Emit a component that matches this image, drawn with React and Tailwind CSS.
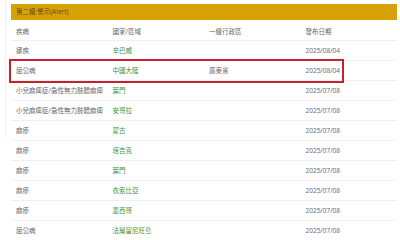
import React from 'react';

const rows = [
  { disease: '瘧疾', country: '辛巴威', region: '', date: '2025/08/04' },
  { disease: '屈公病', country: '中國大陸', region: '廣東省', date: '2025/08/04', flagged: true },
  { disease: '小兒麻痺症/急性無力肢體麻痺', country: '葉門', region: '', date: '2025/07/08' },
  { disease: '小兒麻痺症/急性無力肢體麻痺', country: '安哥拉', region: '', date: '2025/07/08' },
  { disease: '麻疹', country: '蒙古', region: '', date: '2025/07/08' },
  { disease: '麻疹', country: '塔吉克', region: '', date: '2025/07/08' },
  { disease: '麻疹', country: '葉門', region: '', date: '2025/07/08' },
  { disease: '麻疹', country: '衣索比亞', region: '', date: '2025/07/08' },
  { disease: '麻疹', country: '墨西哥', region: '', date: '2025/07/08' },
  { disease: '屈公病', country: '法屬留尼旺島', region: '', date: '2025/07/08' },
];

const App = () => {
  return (
    <div
      className="relative w-[400px] h-[240px] overflow-hidden bg-white text-[6.5px] text-[#666]"
      style={{ fontFamily: '"Open Sans", "Noto Sans CJK TC", sans-serif' }}
    >
      {/* page edge */}
      <div className="absolute left-[5px] top-0 h-[138px] border-l border-[#f0f0f0]" />

      <div className="ml-[11px] mr-[3px] pt-[4px]">
        <div className="h-[16px] bg-[#d6a205] flex items-center px-[5px] text-[#5b4a12]">
          第二級:警示(Alert)
        </div>

        <div className="grid grid-cols-4 h-[20px] items-center">
          <div className="px-[5px] pt-[3px]">疾病</div>
          <div className="px-[5px] pt-[3px]">國家/區域</div>
          <div className="px-[5px] pt-[3px]">一級行政區</div>
          <div className="px-[5px] pt-[3px]">發布日期</div>
        </div>

        {rows.map((r, i) => (
          <div key={i} className="grid grid-cols-4 h-[20px] items-center border-t border-[#f0f0f0]">
            <div className="px-[5px] pt-[1px] whitespace-nowrap">{r.disease}</div>
            <div className="px-[5px] pt-[1px] text-[#45913a]">{r.country}</div>
            <div className="px-[5px] pt-[1px]">{r.region}</div>
            <div className="px-[5px] pt-[1px]">{r.date}</div>
          </div>
        ))}
      </div>

      {/* highlight annotation */}
      <div className="absolute left-[9px] top-[59px] w-[335px] h-[24px] border-2 border-[#c9202f]" />
    </div>
  );
};

export default App;
